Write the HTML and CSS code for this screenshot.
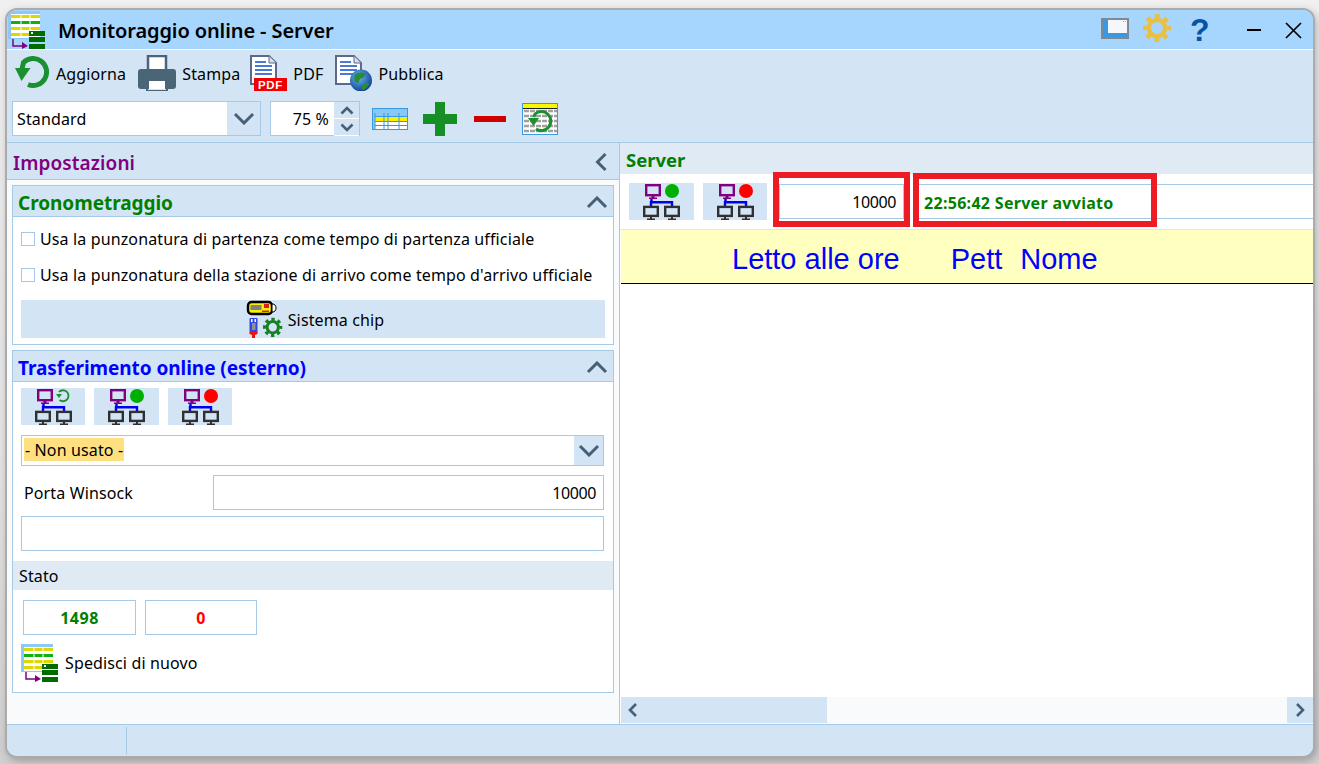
FILE: index.html
```html
<!DOCTYPE html>
<html lang="it">
<head>
<meta charset="utf-8">
<title>Monitoraggio online - Server</title>
<link rel="stylesheet" href="styles.css">
</head>
<body>
<svg class="defs" width="0" height="0" aria-hidden="true">
  <defs>
    <symbol id="send" viewBox="0 0 38 38">
      <rect x="0" y="0" width="32" height="28" fill="#8cc8f8"/>
      <rect x="3" y="3" width="29" height="24" fill="#fff"/>
      <path d="M3 4h29v3H3zM3 16h29v3H3zM3 22h18v3H3z" fill="#dcd800"/>
      <rect x="3" y="10" width="29" height="3" fill="#10b010"/>
      <path d="M13 3v24M22 3v24" stroke="#fff" stroke-width="1"/>
      <path d="M5 28v7h10" fill="none" stroke="#800080" stroke-width="1.5"/>
      <path d="M14 31l6 4-6 3z" fill="#800080"/>
      <path d="M21 20h16v5H21zM21 26h16v5H21zM21 33h16v5H21z" fill="#006c00"/>
      <rect x="23" y="21" width="2" height="2" fill="#fff"/>
    </symbol>
    <symbol id="net" viewBox="0 0 64 37">
      <rect x="17.200" y="2.200" width="13.600" height="10" fill="none" stroke="#800080" stroke-width="2.400"/>
      <path d="M22.500 13h3v1.500h2.500V16h-8v-1.500h2.500z" fill="#800080"/>
      <path d="M22.500 16v3M21 19.200h22M22 18v5M43 18v5" fill="none" stroke="#0000f0" stroke-width="2.400"/>
      <rect x="15.200" y="23.900" width="13.600" height="9" fill="none" stroke="#303030" stroke-width="2.400"/>
      <rect x="36.200" y="23.900" width="13.600" height="9" fill="none" stroke="#303030" stroke-width="2.400"/>
      <path d="M21 34h2v2h-2zM18 35.500h8V37h-8zM42 34h2v2h-2zM39 35.500h8V37h-8z" fill="#303030"/>
    </symbol>
    <symbol id="cog" viewBox="0 0 30 30">
      <circle cx="15" cy="15" r="8.700" fill="none" stroke="currentColor" stroke-width="4.600"/>
      <circle cx="15" cy="15" r="12.500" fill="none" stroke="currentColor" stroke-width="5" stroke-dasharray="5.100 4.720" stroke-dashoffset="2.550"/>
    </symbol>
  </defs>
</svg>

<div class="window">
  <header class="titlebar">
    <svg class="title-icon"><use href="#send"/></svg>
    <h1 class="title">Monitoraggio online - Server</h1>
    <div class="title-tools">
      <svg class="win-icon" viewBox="0 0 28 21"><rect x="1" y="1" width="26" height="19" fill="#f4f8fc" stroke="#808890" stroke-width="2"/><path d="M2 2h5v13h19v4H2z" fill="#3a98e0"/><path d="M22 3h1v1h-1zM24 3h1v1h-1z" fill="#a0a8b0"/></svg>
      <svg class="gear"><use href="#cog"/></svg>
      <span class="help">?</span>
      <svg class="min" viewBox="0 0 14 2"><rect width="14" height="2" fill="#000"/></svg>
      <svg class="close" viewBox="0 0 17 17"><path d="M1 1l15 15M16 1L1 16" stroke="#000" stroke-width="1.700"/></svg>
    </div>
  </header>

  <div class="toolbar">
    <div class="tool-row">
      <button class="tool tool-first">
        <svg class="ic-refresh" viewBox="0 0 36 34"><path d="M7 13L8.500 6.500A13.500 13.500 0 1 1 13 28.500" fill="none" stroke="#1a9030" stroke-width="5"/><path d="M0 12h15.500l-9 13z" fill="#1a9030"/></svg>
        <span>Aggiorna</span>
      </button>
      <button class="tool">
        <svg class="ic-print" viewBox="0 0 38 36"><rect x="10" y="1" width="18" height="16" fill="#fff" stroke="#4a6478" stroke-width="2.500"/><path d="M3 14h32a3 3 0 0 1 3 3v14a3 3 0 0 1-3 3H3a3 3 0 0 1-3-3V17a3 3 0 0 1 3-3z" fill="#4a6478"/><rect x="11" y="26" width="16" height="8" fill="#fff"/><path d="M9 25h20v11H9z" fill="none" stroke="#4a6478" stroke-width="2"/></svg>
        <span>Stampa</span>
      </button>
      <button class="tool tool-tight">
        <svg class="ic-doc" viewBox="0 0 37 36">
          <path d="M1 1h18l7 7v21H1z" fill="#fff" stroke="#5a6a88" stroke-width="2"/>
          <path d="M19 1v7h7" fill="#dde" stroke="#5a6a88"/>
          <path d="M5 6h11v2H5zM5 10h17v2H5zM5 14h17v2H5zM5 18h17v2H5z" fill="#4a78d8"/>
          <rect x="4" y="23" width="33" height="13" fill="#f00000"/>
          <text class="pdf-badge" x="20.500" y="34" text-anchor="middle">PDF</text>
        </svg>
        <span>PDF</span>
      </button>
      <button class="tool">
        <svg class="ic-doc" viewBox="0 0 37 36">
          <defs><radialGradient id="globe" cx="40%" cy="35%" r="70%"><stop offset="0" stop-color="#68b8f0"/><stop offset="1" stop-color="#0c3c98"/></radialGradient></defs>
          <path d="M1 1h18l7 7v21H1z" fill="#fff" stroke="#5a6a88" stroke-width="2"/>
          <path d="M19 1v7h7" fill="#dde" stroke="#5a6a88"/>
          <path d="M5 6h11v2H5zM5 10h17v2H5zM5 14h17v2H5zM5 18h17v2H5z" fill="#4a78d8"/>
          <circle cx="26" cy="25.500" r="11" fill="url(#globe)"/>
          <path d="M20 19c4-2 8-2 11 0l-3 4-3 1-2 4-3-1c-1-3-1-5 0-8zM27 30l6-3 1 3-5 5c-2 0-3-2-2-5z" fill="#2c8c34"/>
        </svg>
        <span>Pubblica</span>
      </button>
    </div>
    <div class="tool-row tool-row-2">
      <div class="combo">
        <span class="combo-text">Standard</span>
        <span class="combo-btn"><svg class="chev" viewBox="0 0 22 13"><path d="M2 2l9 9 9-9" /></svg></span>
      </div>
      <div class="spin">
        <span class="spin-val">75 %</span>
        <span class="spin-btns">
          <span class="spin-btn"><svg class="chev-s" viewBox="0 0 14 9"><path d="M1.500 7.500L7 2l5.500 5.500"/></svg></span>
          <span class="spin-btn"><svg class="chev-s" viewBox="0 0 14 9"><path d="M1.500 1.500L7 7l5.500-5.500"/></svg></span>
        </span>
      </div>
      <svg class="ic-table" viewBox="0 0 36 22"><rect x="0.500" y="0.500" width="35" height="21" fill="#88c8f8" stroke="#3a98e0"/><rect x="3" y="9" width="32" height="4" fill="#f8f000"/><path d="M3 14h32v7H3z" fill="#fff"/><path d="M3 5v16M12 5v16M16 5v16M27 5v16M3 8.500h32M3 13.500h32M3 17.500h32" stroke="#3a98e0" stroke-width="1" fill="none"/></svg>
      <svg class="ic-plus" viewBox="0 0 34 34"><path d="M12 0h10v12h12v10H22v12H12V22H0V12h12z" fill="#169024"/></svg>
      <svg class="ic-minus" viewBox="0 0 32 6"><rect width="32" height="6" fill="#d00000"/></svg>
      <svg class="ic-tabref" viewBox="0 0 36 32">
        <rect x="0.500" y="0.500" width="35" height="31" fill="#fff" stroke="#3a98e0"/>
        <rect x="1" y="1" width="34" height="4" fill="#f8f800"/>
        <rect x="1" y="5" width="34" height="1" fill="#222"/>
        <path d="M2 8h33M2 13h33M2 18h33M2 23h33M2 28h33" stroke="#a0a0a0" stroke-width="2.500" stroke-dasharray="5 1"/>
        <path d="M12 14L13 11A9.500 9.500 0 1 1 14 26" fill="none" stroke="#1a9030" stroke-width="3"/>
        <path d="M6 15h11l-5.500 8z" fill="#1a9030"/>
      </svg>
    </div>
  </div>

  <div class="main">
    <aside class="left">
      <div class="left-head">
        <span class="left-title">Impostazioni</span>
        <svg class="chev-l" viewBox="0 0 12 20"><path d="M10.500 2L2.500 10l8 8"/></svg>
      </div>

      <section class="group group-1">
        <div class="group-head">
          <h2 class="group-title green">Cronometraggio</h2>
          <svg class="chev-up" viewBox="0 0 22 13"><path d="M2 11l9-9 9 9"/></svg>
        </div>
        <label class="check"><span class="box"></span>Usa la punzonatura di partenza come tempo di partenza ufficiale</label>
        <label class="check"><span class="box"></span>Usa la punzonatura della stazione di arrivo come tempo d'arrivo ufficiale</label>
        <button class="chip-btn">
          <svg class="ic-chip" viewBox="0 0 38 38">
            <rect x="3" y="2" width="24" height="12" rx="3.500" fill="#f8f000" stroke="#000" stroke-width="2.400"/>
            <rect x="5.500" y="5" width="11" height="5" fill="#808080"/>
            <path d="M19 4h5v4h-5zM17 10.500h7V12h-7z" fill="#e02020"/>
            <path d="M27 4a3.500 3.500 0 0 1 0 8z" fill="#fff" stroke="#000"/>
            <rect x="4.500" y="18" width="8" height="15" rx="1" fill="#3048e0"/>
            <path d="M6 19h1.500v3H6zM9.500 19H11v3H9.500z" fill="#fff"/>
            <rect x="7" y="23" width="3.500" height="7" fill="#909090"/>
            <path d="M4.500 32h8v2l-2.500 1v3H7v-3l-2.500-1z" fill="#f01010"/>
            <use href="#cog" x="18" y="17.500" width="19.500" height="19.500" class="chip-cog"/>
          </svg>
          <span>Sistema chip</span>
        </button>
      </section>

      <section class="group group-2">
        <div class="group-head">
          <h2 class="group-title blue">Trasferimento online (esterno)</h2>
          <svg class="chev-up" viewBox="0 0 22 13"><path d="M2 11l9-9 9 9"/></svg>
        </div>
        <div class="net-row">
          <button class="net-btn"><svg class="ic-net"><use href="#net"/><path d="M38 4A5.500 5.500 0 1 1 38.500 12" fill="none" stroke="#1a9030" stroke-width="1.800"/><path d="M35 6h6l-3 4z" fill="#1a9030"/></svg></button>
          <button class="net-btn net-btn-wide"><svg class="ic-net"><use href="#net"/><circle cx="43" cy="8" r="7" fill="#00b000"/></svg></button>
          <button class="net-btn"><svg class="ic-net"><use href="#net"/><circle cx="43" cy="8" r="7" fill="#ff0000"/></svg></button>
        </div>
        <div class="select-wide">
          <span class="select-val">- Non usato -</span>
          <span class="select-btn"><svg class="chev" viewBox="0 0 22 13"><path d="M2 2l9 9 9-9"/></svg></span>
        </div>
        <div class="port-row">
          <span class="port-label">Porta Winsock</span>
          <div class="field field-port">10000</div>
        </div>
        <div class="field field-empty"></div>
        <div class="band">Stato</div>
        <div class="stats">
          <div class="stat stat-ok">1498</div>
          <div class="stat stat-err">0</div>
        </div>
        <button class="resend">
          <svg class="ic-send"><use href="#send"/></svg>
          <span>Spedisci di nuovo</span>
        </button>
      </section>
    </aside>

    <section class="right">
      <div class="right-head">Server</div>
      <div class="server-row">
        <button class="net-btn net-btn-wide"><svg class="ic-net"><use href="#net"/><circle cx="43" cy="8" r="7" fill="#00b000"/></svg></button>
        <button class="net-btn"><svg class="ic-net"><use href="#net"/><circle cx="43" cy="8" r="7" fill="#ff0000"/></svg></button>
        <div class="field field-srv marked">10000</div>
        <div class="field field-log"><span class="log-text">22:56:42 Server avviato</span><span class="red-box"></span></div>
      </div>
      <div class="grid-head">
        <span class="col col-time">Letto alle ore</span>
        <span class="col col-bib">Pett</span>
        <span class="col col-name">Nome</span>
      </div>
      <div class="grid-body"></div>
      <div class="hscroll">
        <span class="thumb"><svg class="chev-sc" viewBox="0 0 10 16"><path d="M8 2L2 8l6 6"/></svg></span>
        <span class="scroll-end"><svg class="chev-sc" viewBox="0 0 10 16"><path d="M2 2l6 6-6 6"/></svg></span>
      </div>
    </section>
  </div>

  <footer class="status">
    <span class="status-cell"></span>
  </footer>
</div>
</body>
</html>
```

FILE: styles.css
```css
* { box-sizing: border-box; }
html, body { margin: 0; padding: 0; height: 764px; overflow: hidden; }
body {
  background: linear-gradient(#f0f0f0 0, #e4e4e4 60%, #d0d0d0 100%);
  font-family: "Noto Sans", "Open Sans", sans-serif;
  font-size: 16px;
  letter-spacing: .13px;
  color: #000;
}
.defs { position: absolute; }
button { font: inherit; letter-spacing: inherit; color: inherit; border: 0; background: none; padding: 0; margin: 0; }
h1, h2 { margin: 0; font: inherit; }
svg { display: block; flex: none; }

.window {
  width: 1310px;
  height: 750px;
  margin: 8px 0 0 5px;
  border: 2px solid #ababab;
  border-radius: 12px;
  overflow: hidden;
  display: flex;
  flex-direction: column;
  background: #d3e5f4;
  box-shadow: 2px 3px 8px rgba(0,0,0,.25);
}

/* title bar */
.titlebar {
  height: 40px;
  flex: none;
  background: #a6d5fe;
  border-bottom: 1px solid #fff;
  display: flex;
  align-items: flex-start;
  padding-left: 1px;
}
.title-icon { width: 38px; height: 38px; margin-top: 1px; }
.title { margin: 6px 0 0 12px; font-size: 20px; font-weight: 600; line-height: 30px; letter-spacing: -.1px; }
.title-tools { margin-left: auto; display: flex; align-items: flex-start; }
.win-icon { width: 28px; height: 21px; margin-top: 8px; }
.gear { width: 28px; height: 28px; margin: 4px 0 0 14px; color: #eac040; }
.help { margin-left: 19px; width: 20px; color: #0a52a4; font: 700 32px/40px "Liberation Sans", sans-serif; }
.min { width: 14px; height: 2px; margin: 19px 0 0 37px; }
.close { width: 17px; height: 17px; margin: 12px 11px 0 24px; }

/* tool bar */
.toolbar { height: 93px; flex: none; border-bottom: 1px solid #a6c9e6; padding-top: 5px; }
.tool-row { display: flex; align-items: center; height: 36px; padding-left: 8px; }
.tool { display: flex; align-items: center; gap: 6px; margin-left: 12px; height: 36px; }
.tool span { margin-top: 2px; }
.tool-first { margin-left: 0; gap: 5px; }
.tool-tight { margin-left: 10px; }
.ic-refresh { width: 36px; height: 34px; }
.ic-print { width: 38px; height: 36px; }
.ic-doc { width: 37px; height: 36px; }
.pdf-badge { font: 700 11.500px "Liberation Sans", sans-serif; fill: #fff; letter-spacing: .6px; }

.tool-row-2 { margin-top: 10px; height: 35px; padding-left: 5px; }
.combo {
  width: 249px; height: 35px;
  border: 1px solid #a6c9e6;
  display: flex;
  background: #fff;
}
.combo-text { flex: 1; padding-left: 4px; line-height: 35px; }
.combo-btn { width: 33px; background: #d3e5f4; display: flex; align-items: center; justify-content: center; }
.chev { width: 22px; height: 13px; }
.chev path, .chev-up path, .chev-l path { fill: none; stroke: #466078; stroke-width: 3; }
.chev-s path, .chev-sc path { fill: none; stroke: #466078; stroke-width: 2.600; }
.spin {
  width: 90px; height: 35px; margin-left: 9px;
  border: 1px solid #a6c9e6;
  display: flex;
  background: #fff;
}
.spin-val { flex: 1; text-align: right; padding-right: 5px; line-height: 35px; }
.spin-btns { width: 25px; background: #d3e5f4; display: flex; flex-direction: column; gap: 1px; }
.spin-btn { flex: 1; display: flex; align-items: center; justify-content: center; box-shadow: 0 1px 0 #fff; }
.chev-s { width: 14px; height: 9px; }
.ic-table { width: 36px; height: 22px; margin-left: 12px; }
.ic-plus { width: 34px; height: 34px; margin-left: 15px; }
.ic-minus { width: 32px; height: 6px; margin-left: 17px; }
.ic-tabref { width: 36px; height: 32px; margin-left: 16px; }

/* main */
.main { flex: 1; display: flex; min-height: 0; }
.left { width: 613px; flex: none; background: #f8fafc; border-right: 1px solid #a6c9e6; }
.left-head {
  height: 37px;
  background: #d3e5f4;
  border-bottom: 1px solid #a6c9e6;
  display: flex;
  align-items: center;
  justify-content: space-between;
  padding: 2px 12px 0 6px;
}
.left-title { color: #800080; font-size: 19px; font-weight: 600; letter-spacing: .1px; margin-top: 2px; }
.chev-l { width: 12px; height: 20px; }

.group { margin: 5px 5px 0; border: 1px solid #a6c9e6; background: #fff; }
.group-1 { height: 160px; }
.group-2 { height: 343px; }
.group-head {
  height: 31px;
  background: #d3e5f4;
  border-bottom: 1px solid #a6c9e6;
  display: flex;
  align-items: center;
  justify-content: space-between;
  padding: 2px 5px 0 5px;
}
.group-title { font-size: 19px; font-weight: 700; letter-spacing: -.05px; margin-top: 2px; }
.green { color: #008000; }
.blue { color: #0000ff; }
.chev-up { width: 22px; height: 13px; }

.check { display: flex; align-items: center; height: 36px; padding-left: 8px; }
.check:first-of-type { margin-top: 4px; }
.box { width: 14px; height: 14px; border: 1px solid #a6c9e6; background: #fff; margin-right: 5px; flex: none; }
.chip-btn {
  display: flex; align-items: center; justify-content: center;
  gap: 5px;
  width: 584px; height: 38px;
  margin: 7px 0 0 8px;
  padding-left: 3px;
  background: #d3e5f4;
}
.chip-btn span { margin-top: 2px; }
.ic-chip { width: 38px; height: 38px; }
.chip-cog { color: #188024; }

.net-row { display: flex; gap: 9px; padding: 6px 0 0 8px; }
.net-btn { width: 64px; height: 37px; background: #d3e5f4; display: block; flex: none; }
.net-btn-wide { width: 65px; }
.ic-net { width: 64px; height: 37px; }

.select-wide {
  width: 583px; height: 31px;
  margin: 10px 0 0 8px;
  border: 1px solid #a6c9e6;
  display: flex;
  align-items: stretch;
  background: #fff;
}
.select-val { background: #ffe080; margin: 2px 0 4px 2px; padding: 0 1px; line-height: 25px; }
.select-btn { margin-left: auto; width: 29px; background: #d3e5f4; display: flex; align-items: center; justify-content: center; }

.port-row { display: flex; align-items: center; margin: 9px 0 0 8px; width: 583px; }
.port-label { width: 192px; padding-left: 3px; }
.field { height: 35px; border: 1px solid #a6c9e6; background: #fff; line-height: 35px; }
.field-port { flex: 1; text-align: right; padding-right: 7px; letter-spacing: -.4px; }
.field-empty { width: 583px; margin: 6px 0 0 8px; }
.band { height: 29px; margin-top: 10px; background: #dfeaf4; line-height: 31px; padding-left: 6px; }
.stats { display: flex; gap: 9px; margin: 10px 0 0 10px; }
.stat { height: 35px; border: 1px solid #a6c9e6; text-align: center; line-height: 35px; font-weight: 700; letter-spacing: .5px; }
.stat-ok { width: 113px; color: #008000; }
.stat-err { width: 112px; color: #ff0000; }
.resend { display: flex; align-items: center; gap: 6px; margin: 8px 0 0 8px; height: 39px; }
.ic-send { width: 38px; height: 38px; }

/* right */
.right { flex: 1; min-width: 0; display: flex; flex-direction: column; background: #fff; }
.right-head { height: 31px; flex: none; background: #dfeaf4; color: #008000; font-size: 18.500px; font-weight: 700; line-height: 34px; padding-left: 6px; letter-spacing: 0; }
.server-row {
  height: 56px; flex: none;
  padding: 9px 0 0 9px;
  display: flex;
  align-items: flex-start;
  gap: 9px;
  border-bottom: 1px solid #dce8f0;
}
.field-srv { width: 125px; margin: 1px 0 0 3px; text-align: right; padding-right: 7px; letter-spacing: -.4px; }
.marked { position: relative; }
.marked::after {
  content: "";
  position: absolute;
  left: -7px; right: -7px; top: -13px; bottom: -9px;
  border: 6px solid #ed1c24;
  pointer-events: none;
}
.field-log { flex: 1; margin: 1px 0 0 4px; position: relative; border-right: 0; padding: 1px 0 0 6px; line-height: 34px; font-weight: 700; font-size: 16px; letter-spacing: .3px; color: #008000; }
.red-box {
  position: absolute;
  left: -5px; top: -12px; bottom: -9px; width: 244px;
  border: 6px solid #ed1c24;
}
.grid-head {
  height: 54px; flex: none;
  margin-left: 1px;
  background: #ffffc0;
  border-bottom: 1px solid #000;
  color: #0000ff;
  font: 29px/58px "Liberation Sans", sans-serif;
  letter-spacing: 0;
  display: flex;
}
.col { display: block; }
.col-time { margin-left: 111px; }
.col-bib { margin-left: 51px; }
.col-name { margin-left: 18px; }
.grid-body { flex: 1; }
.hscroll { height: 27px; flex: none; background: #f8fafc; display: flex; justify-content: space-between; margin-left: 1px; padding-bottom: 1px; }
.thumb { width: 206px; background: #d3e5f4; display: flex; align-items: center; padding-left: 7px; }
.scroll-end { width: 26px; background: #d3e5f4; display: flex; align-items: center; padding-left: 8px; }
.chev-sc { width: 10px; height: 16px; }

/* status */
.status { height: 32px; flex: none; background: #d3e5f4; border-top: 1px solid #a6c9e6; padding: 2px 0 0 119px; }
.status-cell { display: block; width: 1px; height: 27px; background: #a6c9e6; }
```
